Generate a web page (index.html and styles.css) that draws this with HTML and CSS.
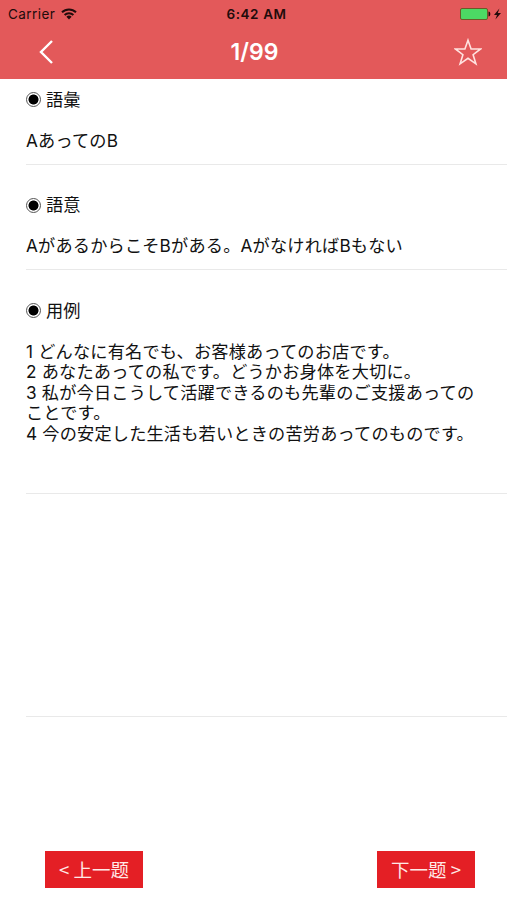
FILE: index.html
```
<!DOCTYPE html>
<html lang="ja">
<head>
  <meta charset="UTF-8" />
  <meta name="viewport" content="width=device-width, initial-scale=1.0" />
  <title>1/99</title>
  <link rel="stylesheet" href="styles.css">
</head>
<body>

  <div class="screen">
    <header class="header">
      <div class="status-bar">
        <div class="carrier">
          <span>Carrier</span>
          <svg class="wifi" width="16" height="12" viewBox="0 0 16 12" fill="none" stroke="#210b0b" stroke-width="2">
            <path d="M1 4.3a10 10 0 0 1 14 0M3.6 7a6.3 6.3 0 0 1 8.8 0" />
            <path d="M8 11.4L5.4 8.8a3.7 3.7 0 0 1 5.2 0z" fill="#210b0b" stroke="none" />
          </svg>
        </div>
        <div class="time">6:42 AM</div>
        <div class="power">
          <svg width="42" height="14" viewBox="0 0 42 14">
            <rect x="0.5" y="1.5" width="27" height="11" rx="1.5" fill="#4cd964" stroke="#6d5a28" />
            <path d="M28.5 4.5c2.4 0 2.4 5 0 5z" fill="#210b0b" />
            <path d="M39.4 1.5L34 8h3L35.4 12.5l5.6-6.6h-3.2z" fill="#210b0b" />
          </svg>
        </div>
      </div>

      <div class="nav-bar">
        <button class="nav-button" aria-label="Back">
          <svg width="14" height="24" viewBox="0 0 14 24" fill="none" stroke="#fff" stroke-width="2.4">
            <path d="M13 1L2 12l11 11" />
          </svg>
        </button>
        <h1>1/99</h1>
        <button class="nav-button" aria-label="Favorite">
          <svg width="28" height="28" viewBox="0 0 28 28" fill="none" stroke="#ffe3e0" stroke-width="1.6">
            <path d="M14 2.2l3.1 8.8h9.5l-7.5 5.7 2.8 9.1-7.9-5.5-7.9 5.5 2.8-9.1L1.4 11h9.5z" />
          </svg>
        </button>
      </div>
    </header>

    <main class="list">
      <section class="row row-word">
        <h2><span class="bullet"></span>語彙</h2>
        <p>AあってのB</p>
      </section>
      <section class="row row-meaning">
        <h2><span class="bullet"></span>語意</h2>
        <p>AがあるからこそBがある。AがなければBもない</p>
      </section>
      <section class="row row-examples">
        <h2><span class="bullet"></span>用例</h2>
        <p>1 どんなに有名でも、お客様あってのお店です。</p>
        <p>2 あなたあっての私です。どうかお身体を大切に。</p>
        <p>3 私が今日こうして活躍できるのも先輩のご支援あっての<br />ことです。</p>
        <p>4 今の安定した生活も若いときの苦労あってのものです。</p>
      </section>
      <section class="row row-empty"></section>
    </main>

    <footer class="footer">
      <button class="page-button" lang="zh-CN">&lt; 上一题</button>
      <button class="page-button" lang="zh-CN">下一题 &gt;</button>
    </footer>
  </div>

</body>
</html>
```
FILE: styles.css
```
* {
  box-sizing: border-box;
}

body {
  margin: 0;
  background-color: #fff;
  color: #111;
  font-family: Inter, "Noto Sans CJK JP", sans-serif;
}

button {
  margin: 0;
  padding: 0;
  border: none;
  font-family: inherit;
  cursor: pointer;
}

.screen {
  display: flex;
  flex-direction: column;
  height: 900px;
  overflow: hidden;
}

/* Header */
.header {
  height: 79px;
  background-color: #e3595a;
}

.status-bar {
  display: grid;
  grid-template-columns: 1fr auto 1fr;
  align-items: center;
  height: 27px;
  padding: 0 5px 0 8px;
  color: #210b0b;
  font-size: 13.5px;
}

.carrier {
  display: flex;
  align-items: center;
  gap: 6px;
  letter-spacing: 0.45px;
}

.time {
  padding-left: 3px;
  font-weight: 600;
  letter-spacing: 0.6px;
}

.power {
  display: flex;
  justify-content: flex-end;
}

.nav-bar {
  display: flex;
  align-items: center;
  justify-content: space-between;
  height: 50px;
  padding: 0 25px 0 32px;
}

.nav-bar h1 {
  margin: 0 5px 0 0;
  color: #fff;
  font-size: 23px;
  font-weight: 600;
  letter-spacing: 0;
}

.nav-button {
  display: flex;
  align-items: center;
  justify-content: center;
  width: 28px;
  height: 40px;
  background: none;
}

/* Rows */
.list {
  flex: 1;
  padding-top: 0.5px;
}

.row {
  margin-left: 26px;
  padding-top: 30px;
  border-bottom: 1px solid #e9e9e9;
  font-size: 17.2px;
  line-height: 20.5px;
  letter-spacing: 0.18px;
}

.row h2 {
  display: flex;
  align-items: center;
  height: 20.5px;
  margin: 0 0 20.5px;
  font-size: inherit;
  font-weight: 400;
  letter-spacing: 0;
}

.row p {
  height: 20.5px;
  margin: 0;
  white-space: nowrap;
}

.row p:has(br) {
  height: 41px;
}

.row-word {
  height: 85px;
  padding-top: 10px;
}

.row-meaning {
  height: 105.5px;
  padding-top: 30.5px;
}

.row-examples {
  height: 223.5px;
  padding-top: 30.5px;
}

.row-empty {
  height: 223.5px;
}

.bullet {
  width: 15px;
  height: 15px;
  margin-right: 5px;
  border: 1px solid #555;
  border-radius: 50%;
  background: radial-gradient(circle, #000 4.6px, #fff 5.4px);
}

/* Footer */
.footer {
  display: flex;
  justify-content: space-between;
  padding: 0 32px 12px 45px;
}

.page-button {
  width: 98px;
  height: 37px;
  background-color: #e41f25;
  color: #ffe9e7;
  font-family: "Noto Sans CJK SC", sans-serif;
  font-size: 18.5px;
  font-weight: 400;
  line-height: 37px;
}
```
